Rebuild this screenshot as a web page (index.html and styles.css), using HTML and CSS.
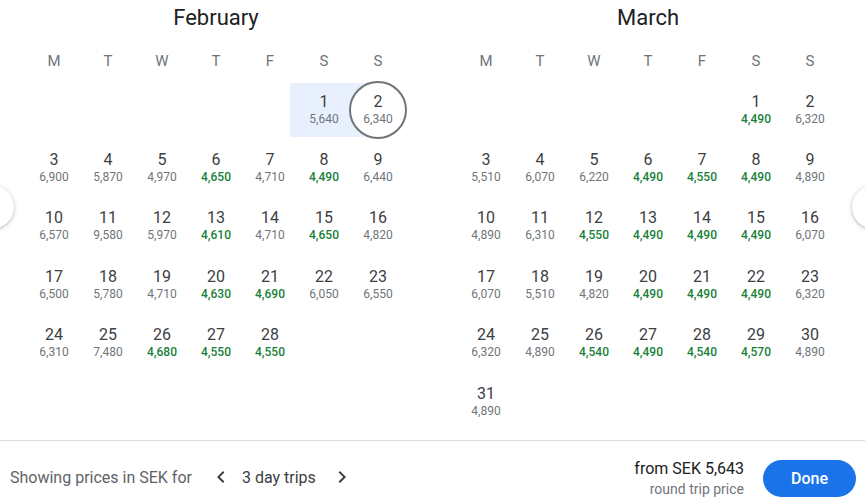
FILE: index.html
```html
<!DOCTYPE html>
<html>
<head>
<meta charset="utf-8">
<link rel="stylesheet" href="styles.css">
</head>
<body>
<div class="picker">
  <div class="months">
    <div class="month">
      <div class="title">February</div>
      <div class="weekdays"><span>M</span><span>T</span><span>W</span><span>T</span><span>F</span><span>S</span><span>S</span></div>
      <div class="grid">
        <div class="cell start-sat range-start"><span class="num">1</span><span class="price">5,640</span></div>
        <div class="cell selected"><span class="num">2</span><span class="price">6,340</span></div>
        <div class="cell"><span class="num">3</span><span class="price">6,900</span></div>
        <div class="cell"><span class="num">4</span><span class="price">5,870</span></div>
        <div class="cell"><span class="num">5</span><span class="price">4,970</span></div>
        <div class="cell"><span class="num">6</span><span class="price low">4,650</span></div>
        <div class="cell"><span class="num">7</span><span class="price">4,710</span></div>
        <div class="cell"><span class="num">8</span><span class="price low">4,490</span></div>
        <div class="cell"><span class="num">9</span><span class="price">6,440</span></div>
        <div class="cell"><span class="num">10</span><span class="price">6,570</span></div>
        <div class="cell"><span class="num">11</span><span class="price">9,580</span></div>
        <div class="cell"><span class="num">12</span><span class="price">5,970</span></div>
        <div class="cell"><span class="num">13</span><span class="price low">4,610</span></div>
        <div class="cell"><span class="num">14</span><span class="price">4,710</span></div>
        <div class="cell"><span class="num">15</span><span class="price low">4,650</span></div>
        <div class="cell"><span class="num">16</span><span class="price">4,820</span></div>
        <div class="cell"><span class="num">17</span><span class="price">6,500</span></div>
        <div class="cell"><span class="num">18</span><span class="price">5,780</span></div>
        <div class="cell"><span class="num">19</span><span class="price">4,710</span></div>
        <div class="cell"><span class="num">20</span><span class="price low">4,630</span></div>
        <div class="cell"><span class="num">21</span><span class="price low">4,690</span></div>
        <div class="cell"><span class="num">22</span><span class="price">6,050</span></div>
        <div class="cell"><span class="num">23</span><span class="price">6,550</span></div>
        <div class="cell"><span class="num">24</span><span class="price">6,310</span></div>
        <div class="cell"><span class="num">25</span><span class="price">7,480</span></div>
        <div class="cell"><span class="num">26</span><span class="price low">4,680</span></div>
        <div class="cell"><span class="num">27</span><span class="price low">4,550</span></div>
        <div class="cell"><span class="num">28</span><span class="price low">4,550</span></div>
      </div>
    </div>
    <div class="month">
      <div class="title">March</div>
      <div class="weekdays"><span>M</span><span>T</span><span>W</span><span>T</span><span>F</span><span>S</span><span>S</span></div>
      <div class="grid">
        <div class="cell start-sat"><span class="num">1</span><span class="price low">4,490</span></div>
        <div class="cell"><span class="num">2</span><span class="price">6,320</span></div>
        <div class="cell"><span class="num">3</span><span class="price">5,510</span></div>
        <div class="cell"><span class="num">4</span><span class="price">6,070</span></div>
        <div class="cell"><span class="num">5</span><span class="price">6,220</span></div>
        <div class="cell"><span class="num">6</span><span class="price low">4,490</span></div>
        <div class="cell"><span class="num">7</span><span class="price low">4,550</span></div>
        <div class="cell"><span class="num">8</span><span class="price low">4,490</span></div>
        <div class="cell"><span class="num">9</span><span class="price">4,890</span></div>
        <div class="cell"><span class="num">10</span><span class="price">4,890</span></div>
        <div class="cell"><span class="num">11</span><span class="price">6,310</span></div>
        <div class="cell"><span class="num">12</span><span class="price low">4,550</span></div>
        <div class="cell"><span class="num">13</span><span class="price low">4,490</span></div>
        <div class="cell"><span class="num">14</span><span class="price low">4,490</span></div>
        <div class="cell"><span class="num">15</span><span class="price low">4,490</span></div>
        <div class="cell"><span class="num">16</span><span class="price">6,070</span></div>
        <div class="cell"><span class="num">17</span><span class="price">6,070</span></div>
        <div class="cell"><span class="num">18</span><span class="price">5,510</span></div>
        <div class="cell"><span class="num">19</span><span class="price">4,820</span></div>
        <div class="cell"><span class="num">20</span><span class="price low">4,490</span></div>
        <div class="cell"><span class="num">21</span><span class="price low">4,490</span></div>
        <div class="cell"><span class="num">22</span><span class="price low">4,490</span></div>
        <div class="cell"><span class="num">23</span><span class="price">6,320</span></div>
        <div class="cell"><span class="num">24</span><span class="price">6,320</span></div>
        <div class="cell"><span class="num">25</span><span class="price">4,890</span></div>
        <div class="cell"><span class="num">26</span><span class="price low">4,540</span></div>
        <div class="cell"><span class="num">27</span><span class="price low">4,490</span></div>
        <div class="cell"><span class="num">28</span><span class="price low">4,540</span></div>
        <div class="cell"><span class="num">29</span><span class="price low">4,570</span></div>
        <div class="cell"><span class="num">30</span><span class="price">4,890</span></div>
        <div class="cell"><span class="num">31</span><span class="price">4,890</span></div>
      </div>
    </div>
  </div>
  <div class="nav nav-prev"></div>
  <div class="nav nav-next"></div>
  <div class="footer">
    <div class="footer-left">
      <span class="showing">Showing prices in SEK for</span>
      <svg class="chev" width="24" height="24" viewBox="0 0 24 24"><path d="M15.4 7.4 14 6l-6 6 6 6 1.4-1.4L10.8 12z" fill="#3c4043"/></svg>
      <span class="trips">3 day trips</span>
      <svg class="chev" width="24" height="24" viewBox="0 0 24 24"><path d="M8.6 16.6 10 18l6-6-6-6-1.4 1.4 4.6 4.6z" fill="#3c4043"/></svg>
    </div>
    <div class="footer-right">
      <div class="summary">
        <div class="from">from SEK 5,643</div>
        <div class="rt">round trip price</div>
      </div>
      <button class="done">Done</button>
    </div>
  </div>
</div>
</body>
</html>
```
FILE: styles.css
```css
html, body {
  margin: 0;
  padding: 0;
  background: #fff;
  overflow: hidden;
}
body {
  font-family: Roboto, "Liberation Sans", sans-serif;
  color: #3c4043;
  width: 865px;
  height: 504px;
}
.picker {
  position: relative;
  width: 865px;
  height: 504px;
}
.months {
  display: flex;
  gap: 54px;
  padding-left: 27px;
  height: 441px;
  border-bottom: 1px solid #dadce0;
  box-sizing: border-box;
}
.month {
  width: 378px;
}
.title {
  height: 34px;
  line-height: 34px;
  padding-top: 1px;
  text-align: center;
  font-size: 22px;
  color: #202124;
}
.weekdays {
  display: grid;
  grid-template-columns: repeat(7, 54px);
  margin-top: 10px;
  height: 32px;
  line-height: 32px;
  font-size: 15px;
  color: #70757a;
  text-align: center;
}
.grid {
  display: grid;
  grid-template-columns: repeat(7, 54px);
  grid-auto-rows: 58.4px;
  margin-top: 3.5px;
}
.cell {
  position: relative;
  display: flex;
  flex-direction: column;
  align-items: center;
  justify-content: center;
}
.start-sat {
  grid-column: 6;
}
.num {
  position: relative;
  z-index: 2;
  font-size: 16px;
  line-height: 18px;
  color: #3c4043;
}
.price {
  position: relative;
  z-index: 2;
  font-size: 12px;
  line-height: 16px;
  color: #70757a;
}
.price.low {
  color: #188038;
  font-weight: 500;
}
.range-start::before {
  content: "";
  position: absolute;
  left: -7px;
  right: -27px;
  top: 2.5px;
  height: 54px;
  background: #e8f0fe;
  z-index: 0;
}
.selected::before {
  content: "";
  position: absolute;
  top: 0.5px;
  left: -2px;
  width: 54px;
  height: 54px;
  border: 2px solid #70757a;
  border-radius: 50%;
  background: #fff;
  z-index: 1;
}
.nav {
  position: absolute;
  top: 185px;
  width: 44px;
  height: 44px;
  border-radius: 50%;
  background: #fff;
  box-shadow: 0 1px 3px rgba(60,64,67,0.3), 0 1px 6px rgba(60,64,67,0.12);
}
.nav-prev { left: -30px; }
.nav-next { left: 852px; }
.footer {
  display: flex;
  justify-content: space-between;
  align-items: flex-start;
  height: 63px;
  padding: 18px 9px 0 10px;
  box-sizing: border-box;
}
.footer-left {
  display: flex;
  align-items: center;
  height: 24px;
  margin-top: 6px;
  font-size: 16px;
}
.showing {
  color: #5f6368;
}
.chev {
  margin: 0 6px;
}
.footer-left .chev:first-of-type {
  margin-left: 17px;
}
.trips {
  color: #3c4043;
  margin: 0 8px 0 3px;
}
.footer-right {
  display: flex;
  align-items: flex-start;
  gap: 19px;
}
.summary {
  text-align: right;
}
.from {
  font-size: 16px;
  line-height: 20px;
  color: #202124;
}
.rt {
  font-size: 14px;
  line-height: 20px;
  color: #70757a;
}
.done {
  width: 93px;
  height: 37px;
  border: none;
  border-radius: 19px;
  background: #1a73e8;
  color: #fff;
  font-family: Roboto, "Liberation Sans", sans-serif;
  font-size: 16px;
  font-weight: 500;
  padding: 0;
  margin-top: 1px;
}
```
